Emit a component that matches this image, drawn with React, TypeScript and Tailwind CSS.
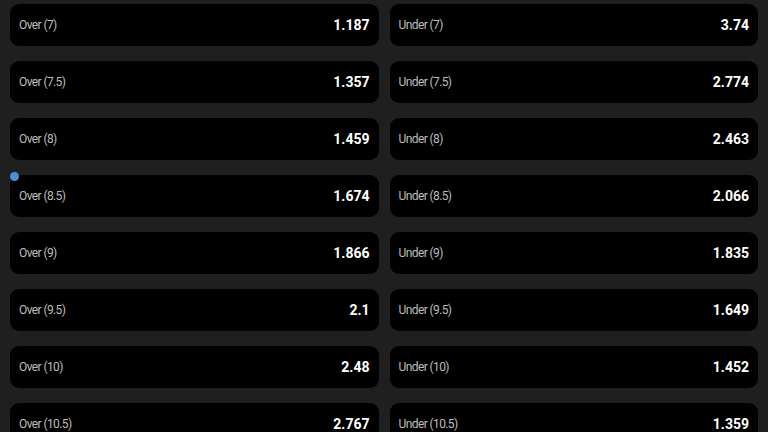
import { Fragment } from "react";

const rows = [
  ["7", "1.187", "3.74"],
  ["7.5", "1.357", "2.774"],
  ["8", "1.459", "2.463"],
  ["8.5", "1.674", "2.066"],
  ["9", "1.866", "1.835"],
  ["9.5", "2.1", "1.649"],
  ["10", "2.48", "1.452"],
  ["10.5", "2.767", "1.359"],
];

function OddCell({ label, value }: { label: string; value: string }) {
  return (
    <div className="flex h-[42px] items-center justify-between rounded-[9px] bg-black pl-[9px] pr-[9px]">
      <span className="text-[12px] tracking-[-0.6px] text-[#bdbdbd]">{label}</span>
      <span className="text-[14px] font-bold text-white">{value}</span>
    </div>
  );
}

export default function App() {
  return (
    <div
      className="relative h-[432px] w-[768px] overflow-hidden bg-[#1f1f1f] pl-[10px] pr-[10px] pt-[4px]"
      style={{ fontFamily: "Roboto, 'Noto Sans', sans-serif" }}
    >
      <div className="grid grid-cols-2 gap-x-[11px] gap-y-[15px]">
        {rows.map(([line, over, under]) => (
          <Fragment key={line}>
            <OddCell label={`Over (${line})`} value={over} />
            <OddCell label={`Under (${line})`} value={under} />
          </Fragment>
        ))}
      </div>
      {/* touch indicator */}
      <div className="absolute left-[10px] top-[172px] h-[9px] w-[9px] rounded-full bg-[#4a8fd8]" />
    </div>
  );
}
